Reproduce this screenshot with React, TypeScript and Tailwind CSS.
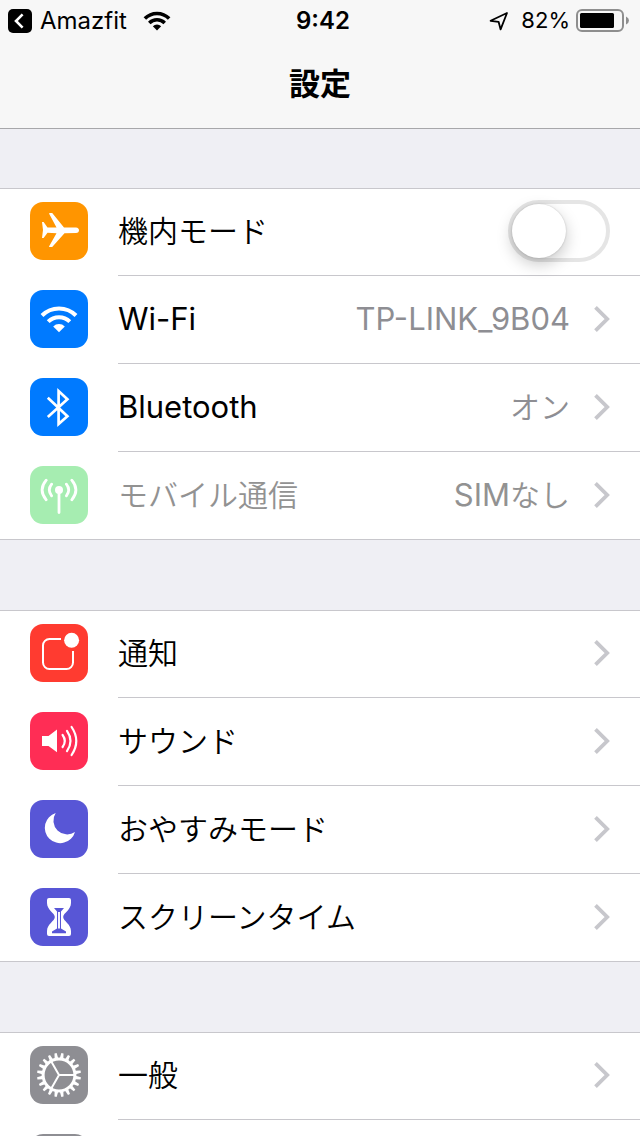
import { useState } from "react"
import type { ReactNode } from "react"

type Row = {
  id: string
  label: string
  latin?: boolean
  color: string
  icon: ReactNode
  value?: ReactNode
  disabled?: boolean
}

function WifiGlyph({ className, weight = 4 }: { className: string; weight?: number }) {
  return (
    <svg viewBox="10 16 38 28" className={className} fill="none" stroke="currentColor" strokeWidth={weight}>
      <path d="M12 26.5A24 24 0 0 1 46 26.5" />
      <path d="M18.2 32.7A15.3 15.3 0 0 1 39.8 32.7" />
      <path d="M29 43.2L23.2 37.4A8.2 8.2 0 0 1 34.8 37.4Z" fill="currentColor" stroke="none" />
    </svg>
  )
}

function Glyph({ children }: { children: ReactNode }) {
  return (
    <svg viewBox="0 0 58 58" className="size-full" fill="none" stroke="white" aria-hidden="true">
      {children}
    </svg>
  )
}

const planeIcon = (
  <Glyph>
    <path
      d="M12 20H13.6L17.5 25.4H26.5L19 11.6Q19 11 20 11H22.2L34 25.4L46 25.6Q49 26 49 28.3Q49 30.8 46 31L34.5 31.2L22.2 45H20Q19 45 19 44.4L26.5 31.2L17.5 30.8L13.6 36H12L13 28Z"
      fill="white"
      stroke="none"
    />
  </Glyph>
)

const wifiIcon = (
  <div className="flex size-full items-center justify-center text-white">
    <WifiGlyph className="h-[28px] w-[38px]" />
  </div>
)

const bluetoothIcon = (
  <Glyph>
    <path d="M17.8 19.8L37.4 38.2L28.6 46V13L37.4 21.2L17.8 39" strokeWidth="2.7" />
  </Glyph>
)

const cellularIcon = (
  <Glyph>
    <circle cx="29" cy="24" r="4" fill="white" stroke="none" />
    <path
      d="M29 24V46.5M21.6 18.2Q17 24 21.6 29.8M36.4 18.2Q41 24 36.4 29.8M16.2 14.2Q8 24 16.2 33.8M41.8 14.2Q50 24 41.8 33.8"
      strokeWidth="2.8"
      strokeLinecap="round"
    />
  </Glyph>
)

const notificationIcon = (
  <Glyph>
    <path
      d="M31 15H19.5A6.5 6.5 0 0 0 13 21.5V38.5A6.5 6.5 0 0 0 19.5 45H36.5A6.5 6.5 0 0 0 43 38.5V27"
      strokeWidth="2"
    />
    <circle cx="41.6" cy="16.3" r="7.5" fill="white" stroke="none" />
  </Glyph>
)

const soundIcon = (
  <Glyph>
    <path d="M12 24H18.5L27 17.6V40.2L18.5 34H12Z" fill="white" stroke="none" />
    <path
      d="M32.6 23Q37 29 32.6 35M37 18.9Q44 29 37 39.1M41.6 15Q51 29 41.6 43"
      strokeWidth="2.2"
      strokeLinecap="round"
    />
  </Glyph>
)

const moonIcon = (
  <Glyph>
    <path d="M25.7 13A15.4 15.4 0 1 0 45 32A13.8 13.8 0 0 1 25.7 13Z" fill="white" stroke="none" />
  </Glyph>
)

const hourglassIcon = (
  <Glyph>
    <path
      d="M19 10H39Q41 10 41 12V15C41 22 33.2 25 33.2 29C33.2 33 41 36 41 43V46Q41 48 39 48H19Q17 48 17 46V43C17 36 24.8 33 24.8 29C24.8 25 17 22 17 15V12Q17 10 19 10Z"
      fill="white"
      stroke="none"
    />
    <path d="M24 20H34L31 23.4V40.6L36 43.4V45.2H22V43.4L27 40.6V23.4Z" fill="#5856d6" stroke="none" />
    <path d="M29 24V40.4" strokeWidth="1.9" />
  </Glyph>
)

const TEETH = Array.from({ length: 20 }, (_, i) => i * 18 + 9)

const gearIcon = (
  <Glyph>
    <circle cx="29" cy="29" r="15.9" strokeWidth="3" />
    {TEETH.map((angle) => (
      <path
        key={angle}
        d="M27.2 12.4L27.9 7H30.1L30.8 12.4Z"
        fill="white"
        stroke="none"
        transform={`rotate(${angle} 29 29)`}
      />
    ))}
    <path d="M29 29H45M29 29L21 15.1M29 29L21 42.9" strokeWidth="2" />
  </Glyph>
)

const connectivity: Row[] = [
  {
    id: "wifi",
    label: "Wi-Fi",
    latin: true,
    color: "bg-[#007aff]",
    icon: wifiIcon,
    value: <span className="text-[31px] font-normal">TP-LINK_9B04</span>,
  },
  { id: "bluetooth", label: "Bluetooth", latin: true, color: "bg-[#007aff]", icon: bluetoothIcon, value: "オン" },
  {
    id: "cellular",
    label: "モバイル通信",
    color: "bg-[#a6edb1]",
    icon: cellularIcon,
    value: (
      <>
        <span className="text-[31px] font-normal">SIM</span>なし
      </>
    ),
    disabled: true,
  },
]

const alerts: Row[] = [
  { id: "notifications", label: "通知", color: "bg-[#ff3b30]", icon: notificationIcon },
  { id: "sound", label: "サウンド", color: "bg-[#ff2d55]", icon: soundIcon },
  { id: "dnd", label: "おやすみモード", color: "bg-[#5856d6]", icon: moonIcon },
  { id: "screentime", label: "スクリーンタイム", color: "bg-[#5856d6]", icon: hourglassIcon },
]

const general: Row[] = [
  { id: "general", label: "一般", color: "bg-[#8e8e93]", icon: gearIcon },
  { id: "more", label: "", color: "bg-[#8e8e93]", icon: null },
]

function IconTile({ color, children }: { color: string; children: ReactNode }) {
  return <span className={`mb-0.5 size-[58px] shrink-0 overflow-hidden rounded-[13px] ${color}`}>{children}</span>
}

function Chevron() {
  return (
    <svg
      viewBox="0 0 16 26"
      className="mb-px ml-6 h-[26px] w-4 shrink-0"
      fill="none"
      stroke="#c7c7cc"
      strokeWidth="3.8"
      aria-hidden="true"
    >
      <path d="M1.5 1.4L13.2 13L1.5 24.6" />
    </svg>
  )
}

// Full-width hairlines on the top and bottom edge of the group
function Group({ children }: { children: ReactNode }) {
  return <ul className="bg-white shadow-[inset_0_1px_0_#c8c7cc,inset_0_-1px_0_#c8c7cc]">{children}</ul>
}

function SettingRow({ row, last }: { row: Row; last?: boolean }) {
  return (
    <li>
      <button type="button" disabled={row.disabled} className="flex w-full items-center pl-[30px] text-left">
        <IconTile color={row.color}>{row.icon}</IconTile>
        <span
          className={`ml-[30px] flex h-[88px] min-w-0 flex-1 items-center border-b pr-[30px] ${
            last ? "border-transparent" : "border-[#c8c7cc]"
          }`}
        >
          <span
            className={`flex-1 whitespace-nowrap ${row.latin ? "text-[31px]" : "text-[30px] font-[350]"} ${
              row.disabled ? "text-[#929292]" : "text-black"
            }`}
          >
            {row.label}
          </span>
          {row.value && (
            <span
              className={`whitespace-nowrap text-[30px] font-[350] ${row.disabled ? "text-[#929292]" : "text-[#8e8e93]"}`}
            >
              {row.value}
            </span>
          )}
          <Chevron />
        </span>
      </button>
    </li>
  )
}

function StatusBar() {
  return (
    <div className="grid h-[41px] grid-cols-[1fr_auto_1fr] items-center px-2 text-[22px]">
      <div className="flex items-center">
        <button type="button" className="flex items-center gap-2 text-[24px]">
          <svg viewBox="0 0 24 24" className="size-6" aria-hidden="true">
            <rect width="24" height="24" rx="5" fill="black" />
            <path d="M14.6 5.4L8 12L14.6 18.6" fill="none" stroke="white" strokeWidth="2.6" />
          </svg>
          <span>Amazfit</span>
        </button>
        <WifiGlyph className="ml-4 h-[20px] w-[28px]" weight={5} />
      </div>
      <time className="pl-1.5 text-[24px] font-semibold">9:42</time>
      <div className="flex items-center justify-end pr-0.5">
        <svg
          viewBox="0 0 20 20"
          className="mr-3 size-5"
          fill="none"
          stroke="black"
          strokeWidth="1.8"
          strokeLinejoin="round"
          aria-hidden="true"
        >
          <path d="M18 2L1.6 9.8L9.6 10.8L11.6 18.4Z" />
        </svg>
        <span>82%</span>
        <svg viewBox="0 0 54 24" className="ml-1.5 h-6 w-[54px]" aria-hidden="true">
          <rect x="1" y="1" width="46" height="21" rx="5" fill="none" stroke="#8e8e8e" strokeWidth="2" />
          <rect x="4" y="4" width="34" height="15" rx="1.5" fill="black" />
          <path d="M50 7.5Q53 9 53 11.5Q53 14 50 15.5Z" fill="#8e8e8e" />
        </svg>
      </div>
    </div>
  )
}

export default function App() {
  const [airplane, setAirplane] = useState(false)

  return (
    <div className="flex h-screen flex-col overflow-hidden bg-[#efeff4] font-['Inter','Noto_Sans_CJK_JP',sans-serif] text-black">
      <header className="shrink-0 border-b border-[#a7a7aa] bg-[#f7f7f7]">
        <StatusBar />
        <h1 className="flex h-[87px] items-center justify-center text-[31px] font-bold">設定</h1>
      </header>

      <main className="flex min-h-0 flex-1 flex-col gap-[70px] overflow-y-auto pt-[59px] [scrollbar-width:none]">
        <Group>
          <li className="flex items-center pl-[30px]">
            <IconTile color="bg-[#ff9500]">{planeIcon}</IconTile>
            <div className="ml-[30px] flex h-[88px] flex-1 items-center border-b border-[#c8c7cc] pr-[30px]">
              <label htmlFor="airplane" className="flex-1 text-[30px] font-[350]">
                機内モード
              </label>
              <input
                id="airplane"
                type="checkbox"
                role="switch"
                checked={airplane}
                onChange={(e) => setAirplane(e.target.checked)}
                className="mb-px flex h-[62px] w-[102px] appearance-none rounded-full border-4 border-[#e5e5e5] bg-white before:size-[54px] before:rounded-full before:bg-white before:shadow-[0_6px_16px_rgba(0,0,0,0.22),0_0_2px_rgba(0,0,0,0.2)] checked:border-[#4cd964] checked:bg-[#4cd964] checked:before:ml-10"
              />
            </div>
          </li>
          {connectivity.map((row, i) => (
            <SettingRow key={row.id} row={row} last={i === connectivity.length - 1} />
          ))}
        </Group>

        <Group>
          {alerts.map((row, i) => (
            <SettingRow key={row.id} row={row} last={i === alerts.length - 1} />
          ))}
        </Group>

        <Group>
          {general.map((row) => (
            <SettingRow key={row.id} row={row} />
          ))}
        </Group>
      </main>
    </div>
  )
}
